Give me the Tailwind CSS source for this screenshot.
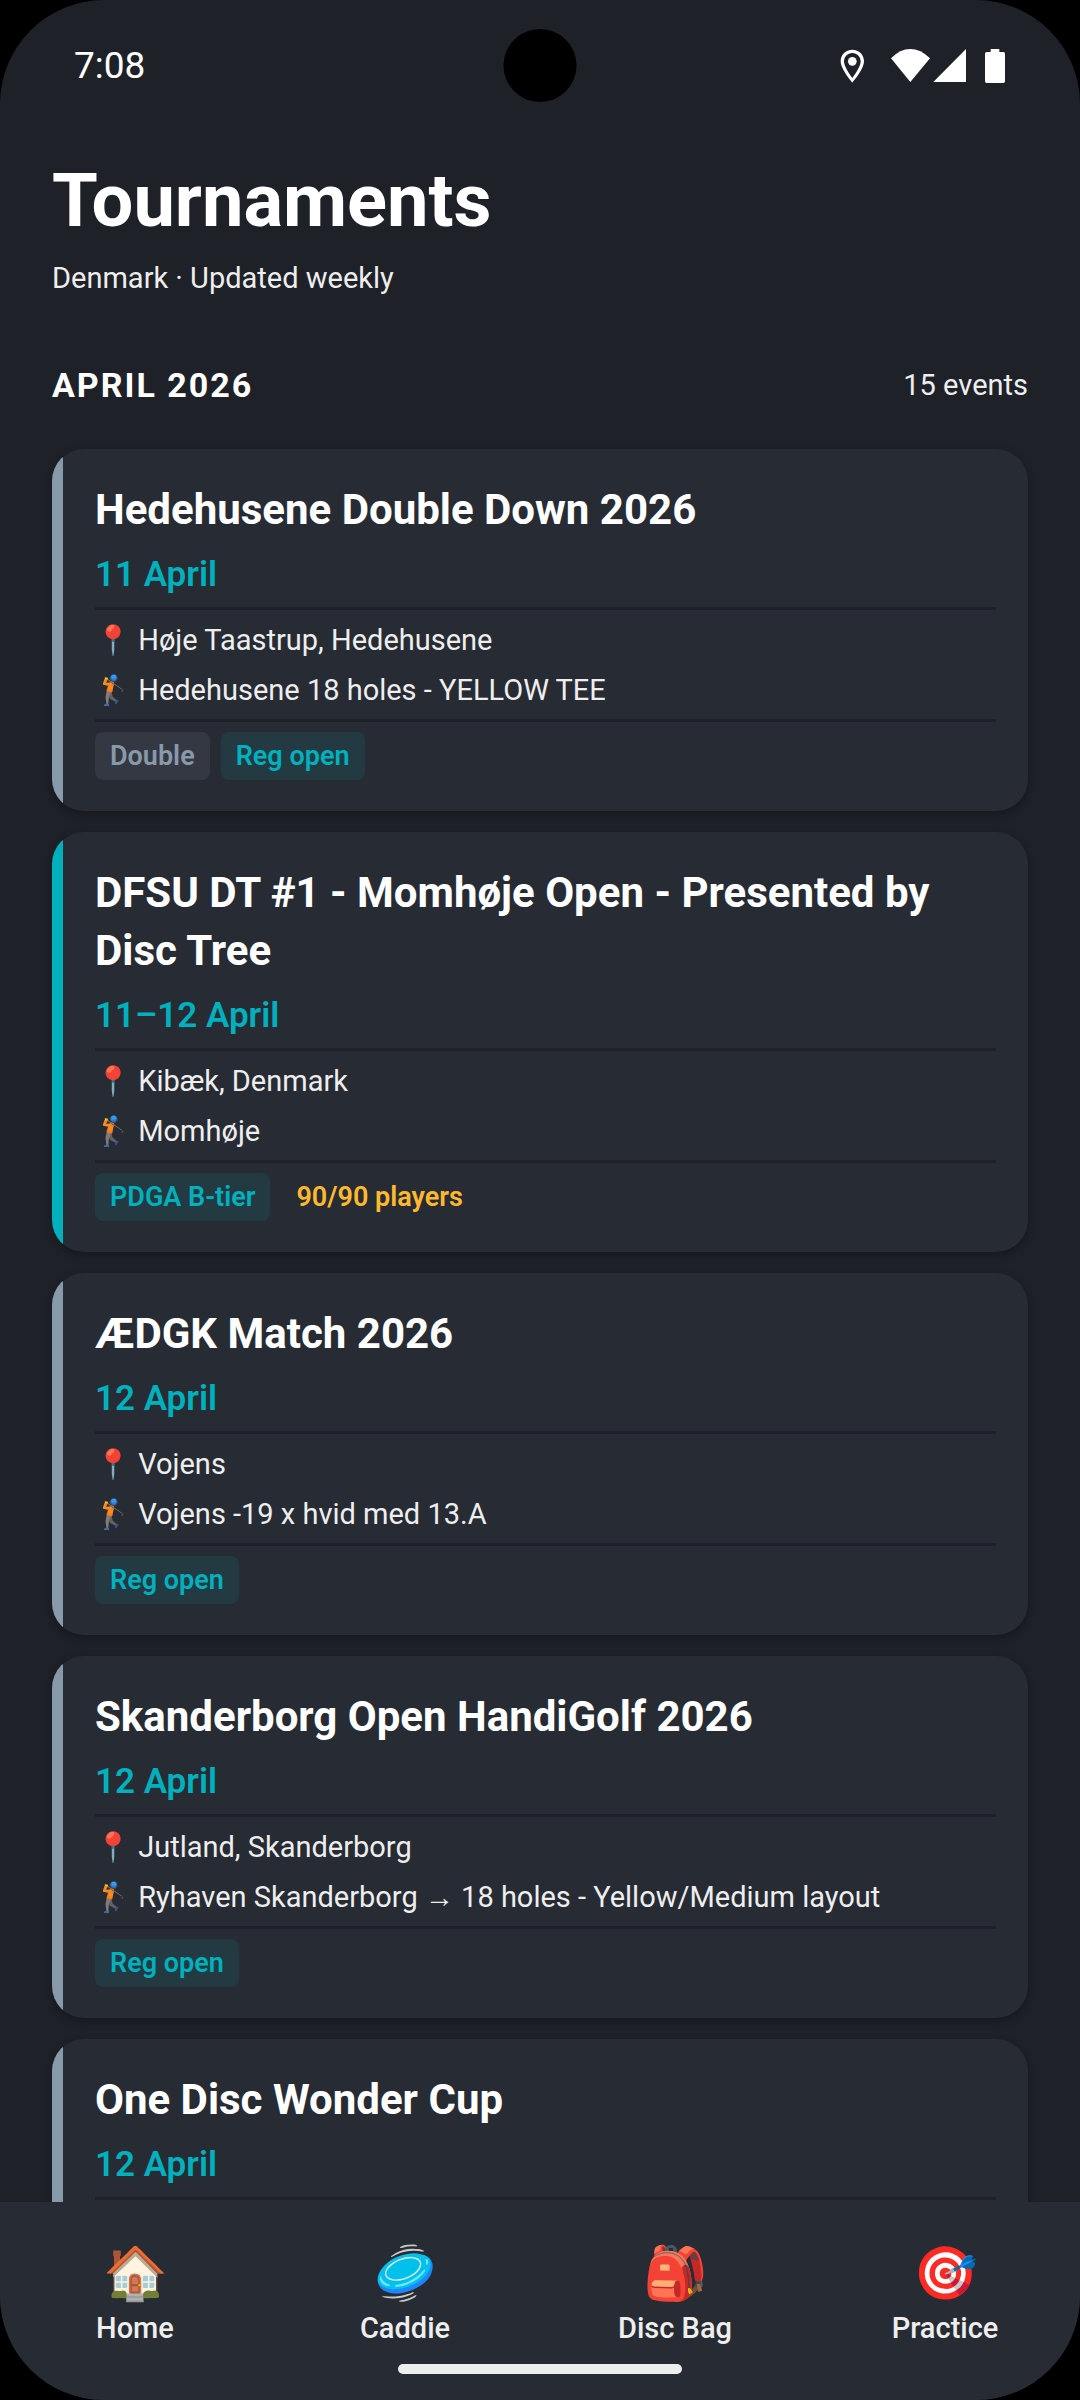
<!DOCTYPE html>
<html lang="en">
<head>
    <meta charset="UTF-8">
    <meta name="viewport" content="width=device-width, initial-scale=1.0">
    <title>Tournaments</title>
    <script src="https://cdn.jsdelivr.net/npm/@tailwindcss/browser@4"></script>
</head>
<body class="bg-black font-[Roboto,sans-serif] text-white">
<div class="flex flex-col h-screen overflow-hidden bg-[#1e2128] rounded-[104px]">

    <!-- status bar -->
    <div class="relative shrink-0 flex items-center justify-between h-[132px] px-[74px]">
        <span class="text-[37px] leading-[44px]">7:08</span>
        <span class="absolute left-1/2 top-[29px] size-[73px] -translate-x-1/2 rounded-full bg-black"></span>
        <svg class="w-[166px] h-[36px]" viewBox="120 84 498 108" fill="#fff">
            <path fill-rule="evenodd" d="M157 89c-20 0-35 15-35 35 0 24 35 64 35 64s35-40 35-64c0-20-15-35-35-35zm0 10c14 0 25 11 25 25 0 14-14 36-25 50-11-14-25-36-25-50 0-14 11-25 25-25z"/>
            <circle cx="157" cy="124" r="13"/>
            <path d="M273 115q27-28 58-28t59 28l-59 71z"/>
            <path d="M498 87v99h-98z"/>
            <path d="M572 87h26v9h12q5 0 5 5v83q0 5-5 5h-50q-5 0-5-5v-83q0-5 5-5h12z"/>
        </svg>
    </div>

    <main class="flex-1 min-h-0 overflow-hidden px-[52px] pt-[25px]">
        <h1 class="text-[74px] leading-[88px] font-bold">Tournaments</h1>
        <p class="mt-[16px] text-[29px] leading-[34px] text-[#eee]">Denmark · Updated weekly</p>

        <div class="mt-[70px] mb-[44px] flex items-center justify-between">
            <h2 class="text-[34px] leading-[40px] font-bold tracking-[2px]">APRIL 2026</h2>
            <span class="text-[29px] leading-[34px] text-[#eee]">15 events</span>
        </div>

        <div class="flex flex-col gap-[21px]">
            <article class="flex shrink-0 rounded-[32px] overflow-hidden bg-[#272b33] shadow-[0_3px_8px_rgba(0,0,0,0.3)]">
                <div class="w-[11px] shrink-0 bg-[#8899aa]"></div>
                <div class="flex-1 px-[32px] pt-[32px] pb-[31px]">
                    <h3 class="text-[42px] leading-[58px] font-bold">Hedehusene Double Down 2026</h3>
                    <p class="mt-[16px] text-[35px] leading-[40px] font-semibold text-[#00b0bd]">11 April</p>
                    <div class="mt-[12px] border-y-[3px] border-[#1e2128] pt-[13px] pb-[12px] flex flex-col gap-[16px] text-[29px] leading-[34px] text-[#eee]">
                        <p>📍 Høje Taastrup, Hedehusene</p>
                        <p>🏌 Hedehusene 18 holes - YELLOW TEE</p>
                    </div>
                    <div class="mt-[10px] flex items-center gap-[11px] text-[27px] leading-[48px] font-semibold">
                        <span class="rounded-[8px] bg-[#343842] px-[15px] text-[#8899aa]">Double</span>
                        <span class="rounded-[8px] bg-[#233a43] px-[15px] text-[#00b0bd]">Reg open</span>
                    </div>
                </div>
            </article>

            <article class="flex shrink-0 rounded-[32px] overflow-hidden bg-[#272b33] shadow-[0_3px_8px_rgba(0,0,0,0.3)]">
                <div class="w-[11px] shrink-0 bg-[#00b0bd]"></div>
                <div class="flex-1 px-[32px] pt-[32px] pb-[31px]">
                    <h3 class="text-[42px] leading-[58px] font-bold">DFSU DT #1 - Momhøje Open - Presented by Disc Tree</h3>
                    <p class="mt-[16px] text-[35px] leading-[40px] font-semibold text-[#00b0bd]">11–12 April</p>
                    <div class="mt-[12px] border-y-[3px] border-[#1e2128] pt-[13px] pb-[12px] flex flex-col gap-[16px] text-[29px] leading-[34px] text-[#eee]">
                        <p>📍 Kibæk, Denmark</p>
                        <p>🏌 Momhøje</p>
                    </div>
                    <div class="mt-[10px] flex items-center gap-[11px] text-[27px] leading-[48px] font-semibold">
                        <span class="rounded-[8px] bg-[#233a43] px-[15px] text-[#00b0bd]">PDGA B-tier</span>
                        <span class="px-[15px] text-[#ffb92e]">90/90 players</span>
                    </div>
                </div>
            </article>

            <article class="flex shrink-0 rounded-[32px] overflow-hidden bg-[#272b33] shadow-[0_3px_8px_rgba(0,0,0,0.3)]">
                <div class="w-[11px] shrink-0 bg-[#8899aa]"></div>
                <div class="flex-1 px-[32px] pt-[32px] pb-[31px]">
                    <h3 class="text-[42px] leading-[58px] font-bold">ÆDGK Match 2026</h3>
                    <p class="mt-[16px] text-[35px] leading-[40px] font-semibold text-[#00b0bd]">12 April</p>
                    <div class="mt-[12px] border-y-[3px] border-[#1e2128] pt-[13px] pb-[12px] flex flex-col gap-[16px] text-[29px] leading-[34px] text-[#eee]">
                        <p>📍 Vojens</p>
                        <p>🏌 Vojens -19 x hvid med 13.A</p>
                    </div>
                    <div class="mt-[10px] flex items-center gap-[11px] text-[27px] leading-[48px] font-semibold">
                        <span class="rounded-[8px] bg-[#233a43] px-[15px] text-[#00b0bd]">Reg open</span>
                    </div>
                </div>
            </article>

            <article class="flex shrink-0 rounded-[32px] overflow-hidden bg-[#272b33] shadow-[0_3px_8px_rgba(0,0,0,0.3)]">
                <div class="w-[11px] shrink-0 bg-[#8899aa]"></div>
                <div class="flex-1 px-[32px] pt-[32px] pb-[31px]">
                    <h3 class="text-[42px] leading-[58px] font-bold">Skanderborg Open HandiGolf 2026</h3>
                    <p class="mt-[16px] text-[35px] leading-[40px] font-semibold text-[#00b0bd]">12 April</p>
                    <div class="mt-[12px] border-y-[3px] border-[#1e2128] pt-[13px] pb-[12px] flex flex-col gap-[16px] text-[29px] leading-[34px] text-[#eee]">
                        <p>📍 Jutland, Skanderborg</p>
                        <p>🏌 Ryhaven Skanderborg → 18 holes - Yellow/Medium layout</p>
                    </div>
                    <div class="mt-[10px] flex items-center gap-[11px] text-[27px] leading-[48px] font-semibold">
                        <span class="rounded-[8px] bg-[#233a43] px-[15px] text-[#00b0bd]">Reg open</span>
                    </div>
                </div>
            </article>

            <!-- runs on under the tab bar -->
            <article class="flex shrink-0 rounded-[32px] overflow-hidden bg-[#272b33] shadow-[0_3px_8px_rgba(0,0,0,0.3)]">
                <div class="w-[11px] shrink-0 bg-[#8899aa]"></div>
                <div class="flex-1 px-[32px] pt-[32px] pb-[31px]">
                    <h3 class="text-[42px] leading-[58px] font-bold">One Disc Wonder Cup</h3>
                    <p class="mt-[16px] text-[35px] leading-[40px] font-semibold text-[#00b0bd]">12 April</p>
                    <div class="mt-[12px] border-t-[3px] border-[#1e2128] pb-[60px]"></div>
                </div>
            </article>
        </div>
    </main>

    <!-- tab bar -->
    <nav class="shrink-0 bg-[#272b33] pt-[42px] pb-[26px]">
        <div class="grid grid-cols-4 text-center text-[29px] leading-[34px] font-medium text-[#eee]">
            <a href="#home" class="flex flex-col items-center gap-[7px]">
                <span class="text-[52px] leading-[60px]">🏠</span>
                Home
            </a>
            <a href="#caddie" class="flex flex-col items-center gap-[7px]">
                <span class="text-[52px] leading-[60px]">🥏</span>
                Caddie
            </a>
            <a href="#bag" class="flex flex-col items-center gap-[7px]">
                <span class="text-[52px] leading-[60px]">🎒</span>
                Disc Bag
            </a>
            <a href="#practice" class="flex flex-col items-center gap-[7px]">
                <span class="text-[52px] leading-[60px]">🎯</span>
                Practice
            </a>
        </div>
        <div class="mx-auto mt-[19px] h-[10px] w-[284px] rounded-full bg-[#eee]"></div>
    </nav>
</div>
</body>
</html>
